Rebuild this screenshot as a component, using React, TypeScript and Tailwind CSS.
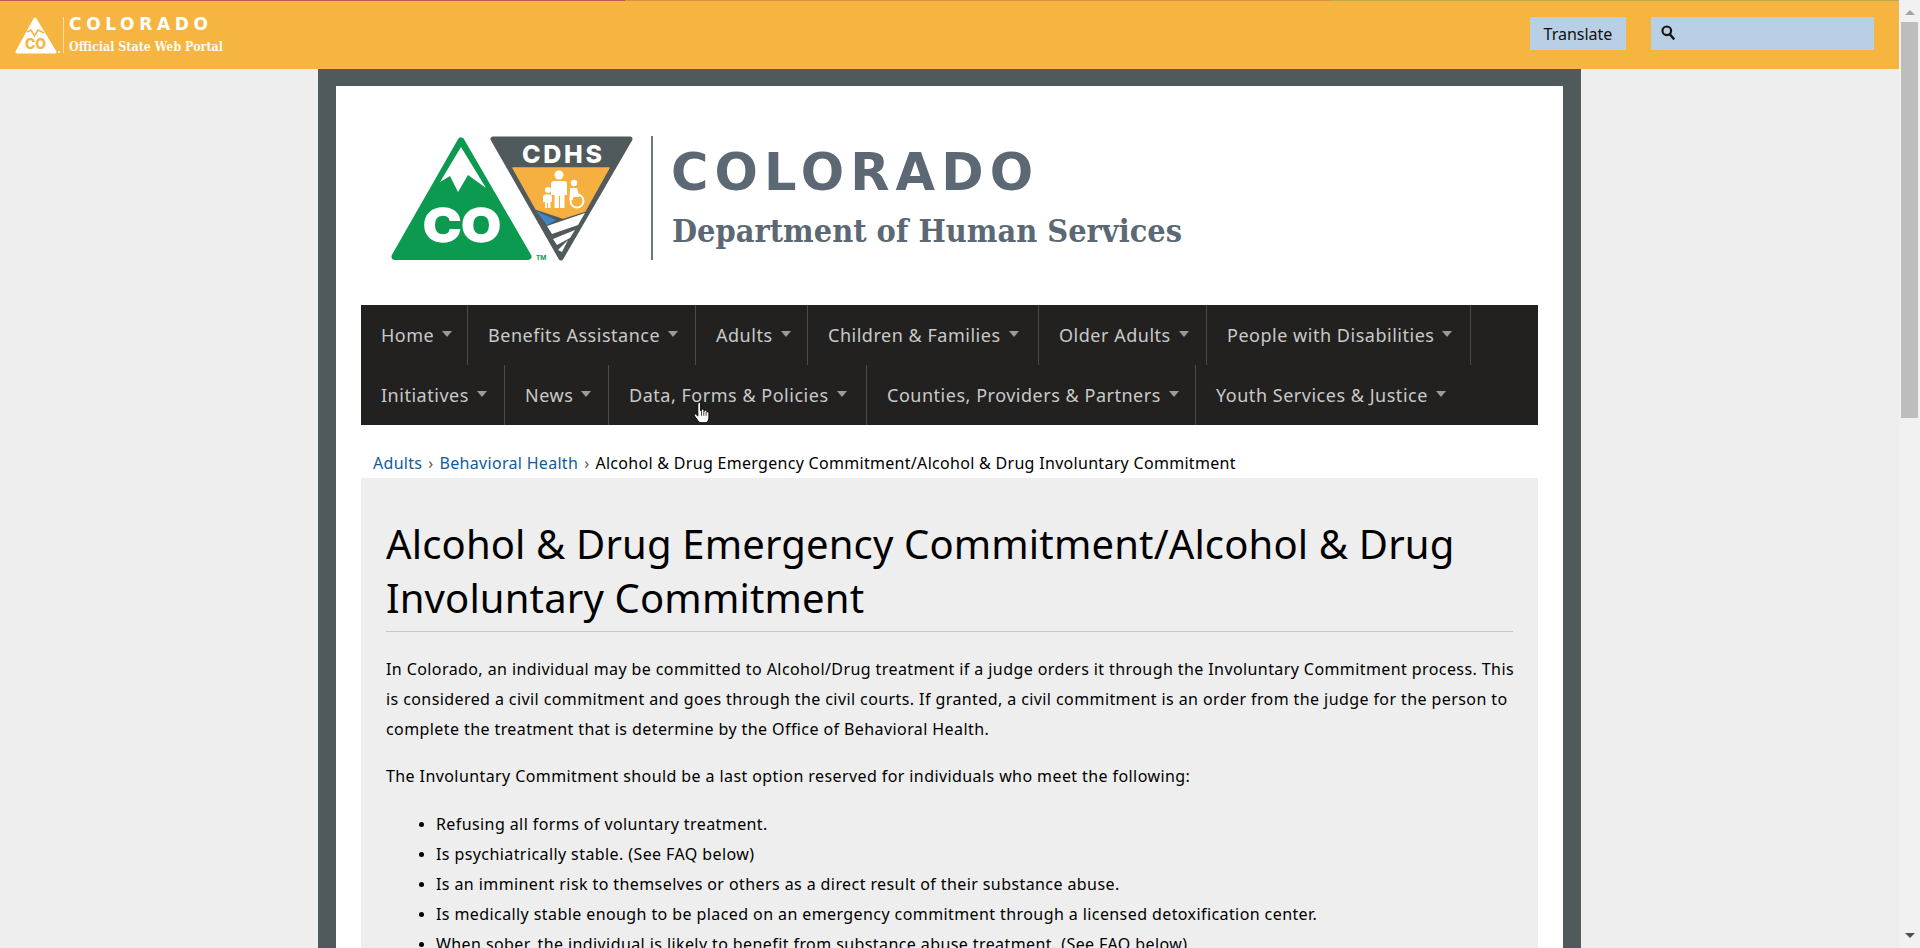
import React from "react";

const row1: [string, number][] = [
  ["Home", 107],
  ["Benefits Assistance", 228],
  ["Adults", 112],
  ["Children & Families", 231],
  ["Older Adults", 168],
  ["People with Disabilities", 264],
];
const row2: [string, number][] = [
  ["Initiatives", 144],
  ["News", 104],
  ["Data, Forms & Policies", 258],
  ["Counties, Providers & Partners", 329],
  ["Youth Services & Justice", 278],
];

function NavRow({ items, lastBorder }: { items: [string, number][]; lastBorder: boolean }) {
  return (
    <div className="flex h-[60px]">
      {items.map(([label, w], i) => (
        <a
          key={label}
          className={
            i === items.length - 1 && !lastBorder
              ? "flex h-full items-center pl-[20px] text-[18px] text-[#c9c9c9] tracking-[0.52px] whitespace-nowrap"
              : "flex h-full items-center border-r border-[#4b4b4a] pl-[20px] text-[18px] text-[#c9c9c9] tracking-[0.52px] whitespace-nowrap"
          }
          style={{ width: w }}
        >
          <span>{label}</span>
          <span className="mb-[2px] ml-[8px] block h-0 w-0 border-x-[5.5px] border-t-[6px] border-x-transparent border-t-[#9a9a9a]" />
        </a>
      ))}
    </div>
  );
}

function HeaderLogo() {
  return (
    <svg width="240" height="68" viewBox="0 0 240 68" className="block">
      <polygon points="17,51 35,18 55,51" fill="#fff" stroke="#fff" strokeWidth="3" strokeLinejoin="round" />
      <polyline points="27,31 31,29 34.5,35 38,29 44,32" fill="none" stroke="#f5b540" strokeWidth="1.6" />
      <text x="25" y="48" textLength="21" lengthAdjust="spacingAndGlyphs" fontFamily="Inter, sans-serif" fontWeight="800" fontSize="14" fill="#f5b540">CO</text>
      <rect x="58" y="50" width="2" height="2" fill="#fff" opacity="0.7" />
      <rect x="63" y="16" width="1" height="36" fill="#fff" opacity="0.55" />
      <text x="69" y="29" textLength="139" lengthAdjust="spacing" fontFamily="'DejaVu Sans', sans-serif" fontWeight="700" fontSize="17" fill="#fff">COLORADO</text>
      <text x="69" y="50" textLength="154" lengthAdjust="spacingAndGlyphs" fontFamily="'DejaVu Serif', serif" fontWeight="700" fontSize="12" fill="#fff" opacity="0.95">Official State Web Portal</text>
    </svg>
  );
}

function MainLogo() {
  return (
    <svg width="920" height="145" viewBox="380 125 920 145" className="block">
      <polygon points="395,256.5 461,141 528,256.5" fill="#0c9a50" stroke="#0c9a50" strokeWidth="7" strokeLinejoin="round" />
      <polygon points="461,147 440,182 450,176 458,192 468,175 486,188" fill="#fff" />
      <text x="423" y="242" textLength="78" lengthAdjust="spacingAndGlyphs" fontFamily="Inter, sans-serif" fontWeight="800" fontSize="46" fill="#fff" stroke="#fff" strokeWidth="1.5">CO</text>
      <text x="536" y="260" fontFamily="Inter, sans-serif" fontWeight="700" fontSize="6.5" fill="#0c9a50">TM</text>

      <polygon points="493,139 630,139 561,258" fill="#50595c" stroke="#50595c" strokeWidth="5" strokeLinejoin="round" />
      <text x="522" y="163" textLength="80" lengthAdjust="spacing" fontFamily="Inter, sans-serif" fontWeight="800" fontSize="25" fill="#fff">CDHS</text>
      <polygon points="513,168 609,168 585,211 563,218 536,209" fill="#f5b040" stroke="#f5b040" strokeWidth="1.5" strokeLinejoin="round" />
      <polygon points="536,211 556,220 547,225" fill="#3f86c8" />
      <polygon points="547,226 585,213 578,225 552,234" fill="#fff" />
      <polygon points="553,239 575,230 570,238 557,245" fill="#fff" />
      <polygon points="558,250 568,240 562,252" fill="#fff" />
      <circle cx="559" cy="175" r="4.500" fill="#fff" />
      <path d="M551 184q0-3 3-3h10q3 0 3 3v11h-2.500v13h-4.500v-12h-1v12h-4.500v-13H551Z" fill="#fff" />
      <circle cx="548" cy="190" r="3" fill="#fff" />
      <path d="M543 197q0-2.500 2-2.500h5q2 0 2 2.500v5h-1.500v6h-2.500v-5h-1v5h-2v-6H543Z" fill="#fff" />
      <circle cx="574" cy="183" r="3.200" fill="#fff" />
      <path d="M570 188h7l2.500 9h-6l-1 3h-3Z" fill="#fff" />
      <circle cx="577" cy="201" r="6.500" fill="none" stroke="#fff" strokeWidth="2" />

      <rect x="651" y="136" width="2" height="124" fill="#6c7880" />
      <text x="671" y="190" textLength="362" lengthAdjust="spacing" fontFamily="'DejaVu Sans', sans-serif" fontWeight="700" fontSize="51" fill="#5c6873">COLORADO</text>
      <text x="672" y="242" textLength="510" lengthAdjust="spacingAndGlyphs" fontFamily="'DejaVu Serif', serif" fontWeight="700" fontSize="32" fill="#5c6873">Department of Human Services</text>
    </svg>
  );
}

function HandCursor() {
  return (
    <svg width="17" height="23" viewBox="0 0 17 25" className="absolute left-[332px] top-[97px]">
      <path d="M4.500 2a1.500 1.500 0 0 1 3 0v7.500h1v-.5a1.300 1.300 0 0 1 2.600 0v1h.6a1.300 1.300 0 0 1 2.600.2v1a1.200 1.200 0 0 1 2.200.5v5.800c0 2.500-1.500 5-4 5H8c-2 0-3-1.400-4-3L.8 15c-.8-1.300.8-2.600 2-1.600l1.700 2Z" fill="#fff" stroke="#000" strokeWidth="1" />
      <path d="M8.500 10v5M11 10v5M13.500 11v4" stroke="#000" strokeWidth="0.8" fill="none" />
    </svg>
  );
}

export default function App() {
  return (
    <div className="flex h-[948px] w-full overflow-hidden bg-[#eeeeee] font-['Noto_Sans',sans-serif] text-[16px] text-black">
      <div className="min-w-0 flex-1">
        <div className="flex h-[1px]">
          <div className="w-[625px] bg-[#c4575a]" />
          <div className="w-[707px] bg-[#d9923f]" />
          <div className="flex-1 bg-[#b8a850]" />
        </div>
        <header className="flex h-[68px] items-start justify-between bg-[#f5b540] pr-[25px]">
          <HeaderLogo />
          <div className="flex items-center gap-[25px] pt-[16px]">
            <div className="flex h-[33px] w-[96px] items-center justify-center bg-[#b9cfe6] text-[16px] text-[#111]">Translate</div>
            <div className="flex h-[33px] w-[223px] items-center bg-[#b9cfe6] pb-[2px] pl-[10px]">
              <svg width="14" height="15" viewBox="0 0 14 15">
                <circle cx="5.800" cy="5.800" r="4.300" fill="none" stroke="#151515" strokeWidth="2.200" />
                <path d="M9 9.500l3.500 4" stroke="#151515" strokeWidth="2.600" strokeLinecap="round" />
              </svg>
            </div>
          </div>
        </header>
        <main className="mx-auto w-[1263px] border-x-[18px] border-t-[17px] border-[#505a5c] bg-white">
          <div className="pl-[44px] pt-[39px] pb-[35px]">
            <MainLogo />
          </div>
          <div className="px-[25px]">
            <nav className="relative h-[120px] bg-[#222120]">
              <NavRow items={row1} lastBorder={true} />
              <NavRow items={row2} lastBorder={false} />
              <HandCursor />
            </nav>
            <div className="flex h-[53px] items-end pb-[3px] pl-[12px] text-[16px] tracking-[0.3px] whitespace-nowrap">
              <a className="text-[#0f5c99]">Adults</a>
              <span className="mx-[6px] text-[#555]">›</span>
              <a className="text-[#0f5c99]">Behavioral Health</a>
              <span className="mx-[6px] text-[#555]">›</span>
              <span>Alcohol &amp; Drug Emergency Commitment/Alcohol &amp; Drug Involuntary Commitment</span>
            </div>
            <section className="bg-[#eeeeee] px-[25px] pb-[120px] pt-[39px]">
              <h1 className="border-b border-[#c8c8c8] pb-[6px] text-[40px] leading-[54px] font-normal tracking-[0.15px] whitespace-nowrap">
                <span className="block">Alcohol &amp; Drug Emergency Commitment/Alcohol &amp; Drug</span>
                <span className="block">Involuntary Commitment</span>
              </h1>
              <p className="mt-[22px] leading-[30px] tracking-[0.41px] whitespace-nowrap">
                <span className="block">In Colorado, an individual may be committed to Alcohol/Drug treatment if a judge orders it through the Involuntary Commitment process. This</span>
                <span className="block">is considered a civil commitment and goes through the civil courts. If granted, a civil commitment is an order from the judge for the person to</span>
                <span className="block">complete the treatment that is determine by the Office of Behavioral Health.</span>
              </p>
              <p className="mt-[17px] leading-[30px] tracking-[0.41px]">The Involuntary Commitment should be a last option reserved for individuals who meet the following:</p>
              <ul className="mt-[18px] list-disc pl-[50px] leading-[30px] tracking-[0.41px] marker:text-[14px]">
                <li>Refusing all forms of voluntary treatment.</li>
                <li>Is psychiatrically stable. (See FAQ below)</li>
                <li>Is an imminent risk to themselves or others as a direct result of their substance abuse.</li>
                <li>Is medically stable enough to be placed on an emergency commitment through a licensed detoxification center.</li>
                <li>When sober, the individual is likely to benefit from substance abuse treatment. (See FAQ below)</li>
              </ul>
            </section>
          </div>
        </main>
      </div>
      <aside className="flex h-full w-[21px] shrink-0 flex-col items-center bg-[#f1f1f1]">
        <div className="mt-[10px] h-0 w-0 border-x-[5px] border-b-[5px] border-x-transparent border-b-[#a3a3a3]" />
        <div className="mt-[7px] h-[396px] w-[17px] bg-[#bdbdbd]" />
        <div className="mb-[10px] mt-auto h-0 w-0 border-x-[5px] border-t-[5px] border-x-transparent border-t-[#505050]" />
      </aside>
    </div>
  );
}
